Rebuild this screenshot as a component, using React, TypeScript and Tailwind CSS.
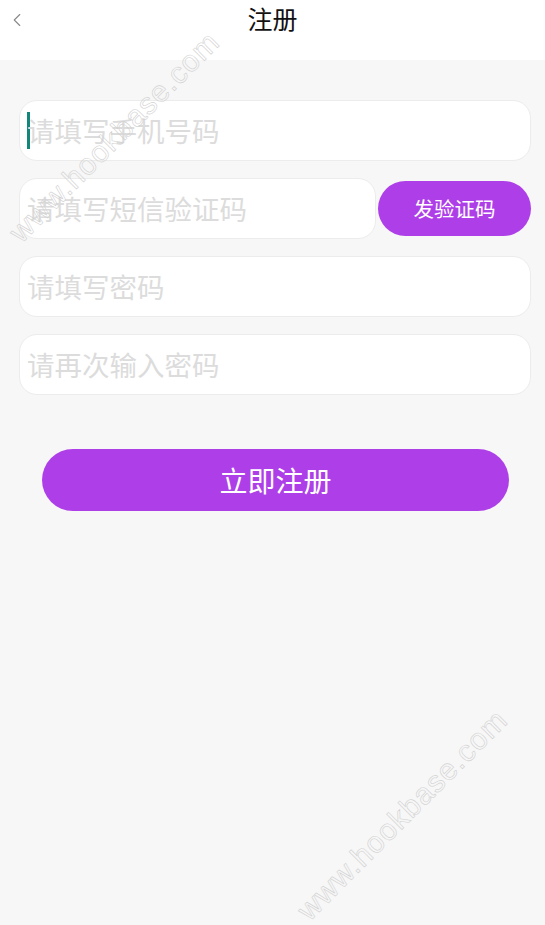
import { ChevronLeft } from 'lucide-react';

const fontStack = { fontFamily: '"Noto Sans CJK SC", "Noto Sans", sans-serif' };

function Field({ placeholder, cursor = false, className = '' }: { placeholder: string; cursor?: boolean; className?: string }) {
  return (
    <div className={`flex h-[61px] items-center rounded-[18px] border border-[#ececec] bg-white pl-[7px] ${className}`}>
      {cursor && <span className="mr-[-3px] h-[37px] w-[3px] bg-[#13867a]" />}
      <span className="text-[27.5px] leading-none text-[#dcdcdc]">{placeholder}</span>
    </div>
  );
}

function Watermark({ className }: { className: string }) {
  return (
    <div
      className={`pointer-events-none absolute origin-left -rotate-45 whitespace-nowrap text-[30px] tracking-[1px] ${className}`}
      style={{ fontFamily: '"Liberation Sans", sans-serif', WebkitTextStroke: '0.6px #d2d2d2', color: 'transparent' }}
    >
      www.hookbase.com
    </div>
  );
}

export default function App() {
  return (
    <div className="relative flex h-[925px] w-[545px] flex-col overflow-hidden bg-[#f7f7f7]" style={fontStack}>
      {/* Header */}
      <div className="relative flex h-[60px] items-center justify-center bg-white">
        <ChevronLeft className="absolute left-[6px] top-[9px] h-[22px] w-[22px] text-[#888]" strokeWidth={1.2} />
        <h1 className="mt-[-22px] text-[25px] text-[#111]">注册</h1>
      </div>

      {/* Form */}
      <div className="flex flex-col gap-[17px] pl-[19px] pr-[14px] pt-[40px]">
        <Field placeholder="请填写手机号码" cursor />
        <div className="flex items-center gap-[2px]">
          <Field placeholder="请填写短信验证码" className="w-[357px]" />
          <button className="h-[55px] flex-1 rounded-full bg-[#ae3fe8] text-[20.5px] text-white">发验证码</button>
        </div>
        <Field placeholder="请填写密码" />
        <Field placeholder="请再次输入密码" />
      </div>

      <div className="px-[42px] pt-[54px]">
        <button className="h-[62px] w-[467px] rounded-full bg-[#ae3fe8] text-[28px] text-white">立即注册</button>
      </div>

      <Watermark className="left-[14px] top-[214px]" />
      <Watermark className="left-[302px] top-[892px]" />
    </div>
  );
}
